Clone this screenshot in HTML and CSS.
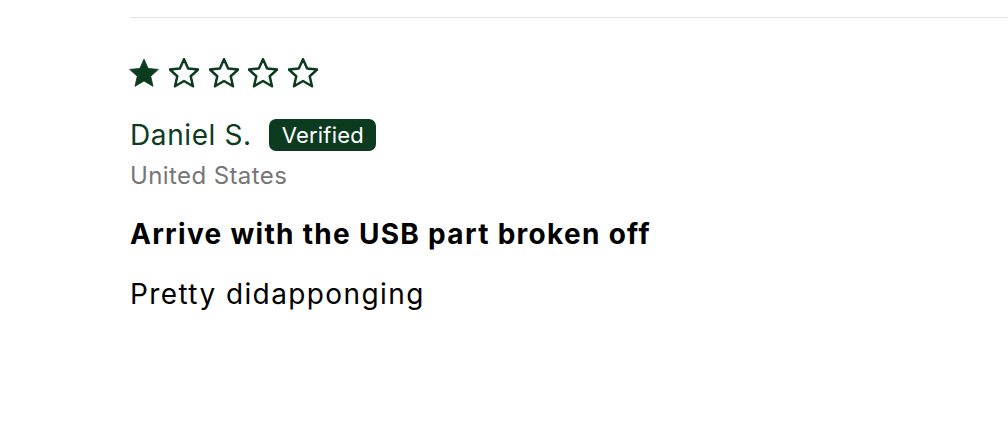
FILE: index.html
```html
<!DOCTYPE html>
<html>
<head>
<meta charset="utf-8">
<link rel="stylesheet" href="styles.css">
</head>
<body>
<div class="review">
  <div class="stars">
    <svg class="star" viewBox="1.5 1.7 21 21"><path class="filled" d="M12 2.5l2.9 6.5 7.1.7-5.3 4.8 1.6 7-6.3-3.7-6.3 3.7 1.6-7L2 9.7l7.1-.7z"/></svg>
    <svg class="star" viewBox="1.5 1.7 21 21"><path class="empty" d="M12 2.5l2.9 6.5 7.1.7-5.3 4.8 1.6 7-6.3-3.7-6.3 3.7 1.6-7L2 9.7l7.1-.7z"/></svg>
    <svg class="star" viewBox="1.5 1.7 21 21"><path class="empty" d="M12 2.5l2.9 6.5 7.1.7-5.3 4.8 1.6 7-6.3-3.7-6.3 3.7 1.6-7L2 9.7l7.1-.7z"/></svg>
    <svg class="star" viewBox="1.5 1.7 21 21"><path class="empty" d="M12 2.5l2.9 6.5 7.1.7-5.3 4.8 1.6 7-6.3-3.7-6.3 3.7 1.6-7L2 9.7l7.1-.7z"/></svg>
    <svg class="star" viewBox="1.5 1.7 21 21"><path class="empty" d="M12 2.5l2.9 6.5 7.1.7-5.3 4.8 1.6 7-6.3-3.7-6.3 3.7 1.6-7L2 9.7l7.1-.7z"/></svg>
  </div>
  <div class="author">
    <span class="name">Daniel S.</span>
    <span class="badge">Verified</span>
  </div>
  <div class="country">United States</div>
  <h3 class="title">Arrive with the USB part broken off</h3>
  <p class="body">Pretty didapponging</p>
</div>
</body>
</html>
```
FILE: styles.css
```css
html, body {
  margin: 0;
  padding: 0;
  background: #fff;
}
body {
  font-family: Inter, "Noto Sans", sans-serif;
  color: #000;
}
.review {
  margin-left: 130px;
  border-top: 1.5px solid #e4e4e4;
  margin-top: 16.5px;
  padding-top: 40px;
}
.stars {
  display: flex;
  gap: 9.75px;
  height: 30px;
  margin-left: -1px;
}
.star {
  width: 30px;
  height: 30px;
}
.star .filled {
  fill: #0c3b1f;
  stroke: #0c3b1f;
  stroke-width: 0.6;
  stroke-linejoin: round;
}
.star .empty {
  fill: none;
  stroke: #0c3b1f;
  stroke-width: 1.75;
  stroke-linejoin: round;
}
.author {
  display: flex;
  align-items: center;
  gap: 17px;
  margin-top: 31px;
}
.name {
  font-size: 28px;
  letter-spacing: 0.6px;
  color: #0c3b1f;
  line-height: 32px;
}
.badge {
  background: #0c3b1f;
  color: #fff;
  font-size: 22px;
  letter-spacing: 0.2px;
  line-height: 32px;
  padding: 0 12px 0 13px;
  border-radius: 7px;
}
.country {
  font-size: 24px;
  letter-spacing: 0.4px;
  color: #767676;
  line-height: 28px;
  margin-top: 11px;
}
.title {
  font-size: 28px;
  font-weight: 700;
  letter-spacing: 1.3px;
  margin: 27.5px 0 0;
  line-height: 34px;
}
.body {
  font-size: 28px;
  letter-spacing: 1.4px;
  margin: 26.3px 0 0;
  line-height: 34px;
}
```
